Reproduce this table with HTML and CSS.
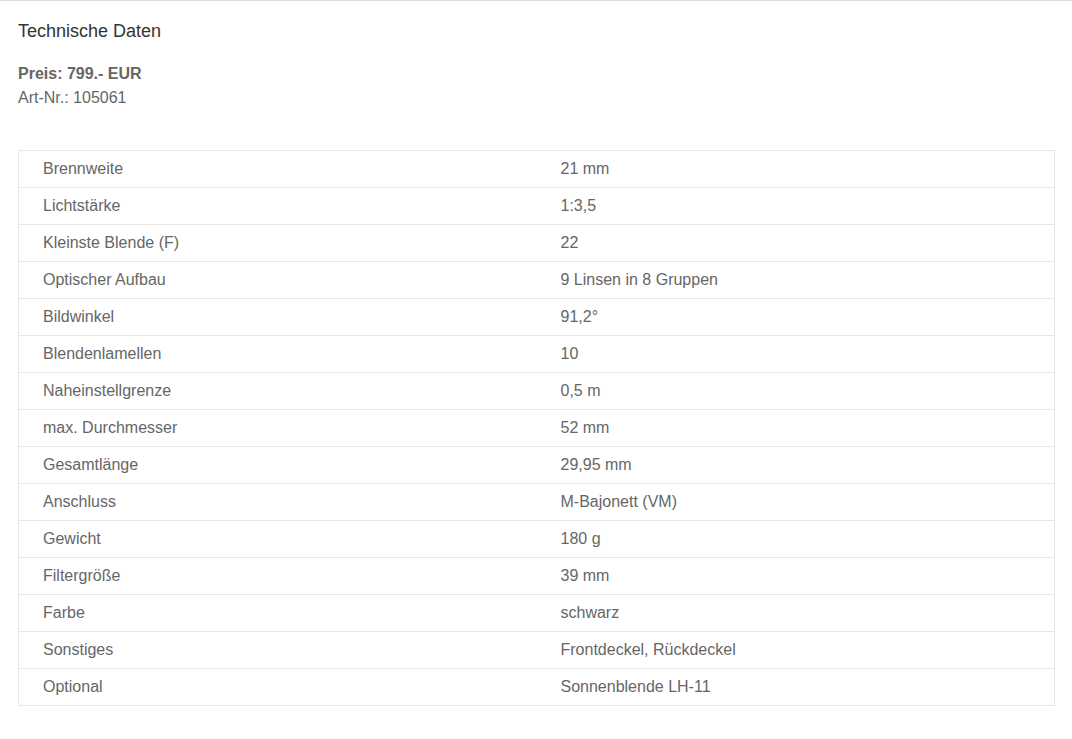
FILE: index.html
```html
<!DOCTYPE html>
<html lang="de">
<head>
<meta charset="utf-8">
<title>Technische Daten</title>
<link rel="stylesheet" href="styles.css">
</head>
<body>
<div class="page">
  <h2 class="title">Technische Daten</h2>
  <div class="price-block">
    <div class="price">Preis: 799.- EUR</div>
    <div class="artnr">Art-Nr.: 105061</div>
  </div>
  <table class="specs">
    <tbody>
      <tr><td>Brennweite</td><td>21 mm</td></tr>
      <tr><td>Lichtstärke</td><td>1:3,5</td></tr>
      <tr><td>Kleinste Blende (F)</td><td>22</td></tr>
      <tr><td>Optischer Aufbau</td><td>9 Linsen in 8 Gruppen</td></tr>
      <tr><td>Bildwinkel</td><td>91,2°</td></tr>
      <tr><td>Blendenlamellen</td><td>10</td></tr>
      <tr><td>Naheinstellgrenze</td><td>0,5 m</td></tr>
      <tr><td>max. Durchmesser</td><td>52 mm</td></tr>
      <tr><td>Gesamtlänge</td><td>29,95 mm</td></tr>
      <tr><td>Anschluss</td><td>M-Bajonett (VM)</td></tr>
      <tr><td>Gewicht</td><td>180 g</td></tr>
      <tr><td>Filtergröße</td><td>39 mm</td></tr>
      <tr><td>Farbe</td><td>schwarz</td></tr>
      <tr><td>Sonstiges</td><td>Frontdeckel, Rückdeckel</td></tr>
      <tr><td>Optional</td><td>Sonnenblende LH-11</td></tr>
    </tbody>
  </table>
</div>
</body>
</html>
```
FILE: styles.css
```css
html, body {
  margin: 0;
  padding: 0;
  background: #fff;
}
body {
  font-family: "Liberation Sans", Arial, Helvetica, sans-serif;
  font-size: 16px;
  line-height: 24px;
  color: #666;
  border-top: 1px solid #dcdcdc;
}
.page {
  padding: 0 17px 0 18px;
}
.title {
  margin: 18px 0 0 0;
  font-size: 18px;
  font-weight: normal;
  line-height: 24px;
  color: #333;
}
.price-block {
  margin-top: 19px;
}
.price {
  font-weight: bold;
}
.specs {
  margin-top: 40px;
  width: 100%;
  border-collapse: collapse;
  table-layout: fixed;
  border: 1px solid #e6e6e6;
}
.specs td {
  width: 50%;
  padding: 8px 24px;
  line-height: 20px;
  border-top: 1px solid #e6e6e6;
  vertical-align: middle;
}
```
